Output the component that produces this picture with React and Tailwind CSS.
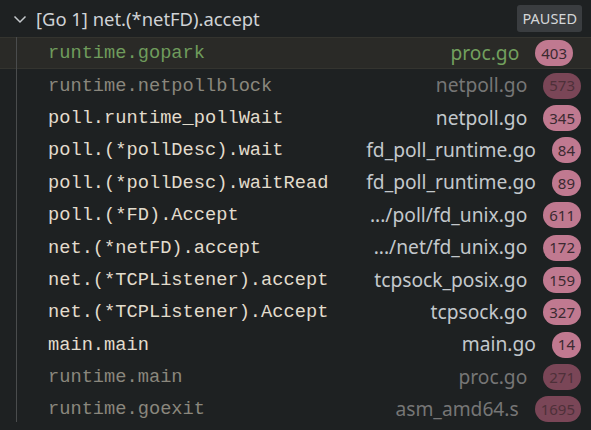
import React from 'react';

const frames = [
  { fn: 'runtime.gopark', file: 'proc.go', line: 403, kind: 'top' },
  { fn: 'runtime.netpollblock', file: 'netpoll.go', line: 573, kind: 'dim' },
  { fn: 'poll.runtime_pollWait', file: 'netpoll.go', line: 345, kind: 'norm' },
  { fn: 'poll.(*pollDesc).wait', file: 'fd_poll_runtime.go', line: 84, kind: 'norm' },
  { fn: 'poll.(*pollDesc).waitRead', file: 'fd_poll_runtime.go', line: 89, kind: 'norm' },
  { fn: 'poll.(*FD).Accept', file: '.../poll/fd_unix.go', line: 611, kind: 'norm' },
  { fn: 'net.(*netFD).accept', file: '.../net/fd_unix.go', line: 172, kind: 'norm' },
  { fn: 'net.(*TCPListener).accept', file: 'tcpsock_posix.go', line: 159, kind: 'norm' },
  { fn: 'net.(*TCPListener).Accept', file: 'tcpsock.go', line: 327, kind: 'norm' },
  { fn: 'main.main', file: 'main.go', line: 14, kind: 'norm' },
  { fn: 'runtime.main', file: 'proc.go', line: 271, kind: 'dim' },
  { fn: 'runtime.goexit', file: 'asm_amd64.s', line: 1695, kind: 'dim' },
];

const mono = { fontFamily: '"Liberation Mono", monospace' };
const sans = { fontFamily: '"Noto Sans", sans-serif' };

const Frame = ({ f }) => {
  const top = f.kind === 'top';
  const dim = f.kind === 'dim';
  return (
    <div
      className={
        'flex items-center h-[32.4px] pl-[48px] ' +
        (top ? 'bg-[#2a2a27] border-y border-[#34342f] pr-[18px]' : 'pr-[10px]')
      }
    >
      <span
        className={
          'text-[18.7px] whitespace-nowrap ' +
          (top ? 'text-[#6f9c5c]' : dim ? 'text-[#8a877d]' : 'text-[#e2dccd]')
        }
        style={mono}
      >
        {f.fn}
      </span>
      <span
        className={
          'ml-auto text-[19.2px] whitespace-nowrap ' +
          (top ? 'text-[#72a05e]' : dim ? 'text-[#767676]' : 'text-[#c3c8cc]')
        }
        style={sans}
      >
        {f.file}
      </span>
      <span
        className={
          'ml-[16px] h-[26px] min-w-[28px] px-[6px] rounded-full flex items-center justify-center text-[15px] ' +
          (dim ? 'bg-[#7a4657] text-[#4e3039]' : 'bg-[#c07990] text-[#3b2a30]')
        }
        style={sans}
      >
        {f.line}
      </span>
    </div>
  );
};

export default function App() {
  return (
    <div className="w-[591px] h-[430px] overflow-hidden bg-[#1e2122]">
      <div className="h-[37px] flex items-center pl-[12px] pr-[9px]">
        <svg width="16" height="16" viewBox="0 0 16 16" className="mr-[8px]">
          <path d="M2.5 5.5 L8 11 L13.5 5.5" fill="none" stroke="#c5c8cc" strokeWidth="1.5" />
        </svg>
        <span className="text-[18.4px] text-[#d0d3d6]" style={sans}>
          [Go 1] net.(*netFD).accept
        </span>
        <span
          className="ml-auto h-[27px] px-[5px] flex items-center rounded-[3px] bg-[#3a3d40] text-[14.5px] text-[#d4d6d8]"
          style={sans}
        >
          PAUSED
        </span>
      </div>
      <div className="relative">
        <div className="absolute left-[16px] top-0 bottom-[4px] w-px bg-[#4a4c4d]" />
        {frames.map((f, i) => (
          <Frame key={i} f={f} />
        ))}
      </div>
    </div>
  );
}
